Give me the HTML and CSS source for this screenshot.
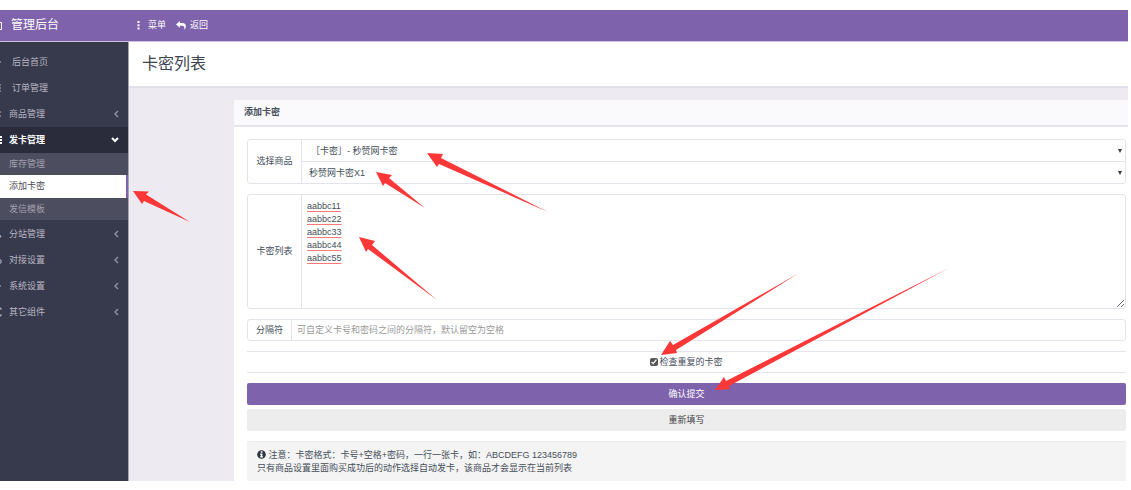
FILE: index.html
```html
<!DOCTYPE html>
<html lang="zh-CN">
<head>
<meta charset="utf-8">
<title>管理后台 - 卡密列表</title>
<link rel="stylesheet" href="styles.css">
</head>
<body>
<div class="app">
  <header class="topbar">
    <a class="brand" href="#">
      <svg class="edge-icon" viewBox="0 0 3 12"><path d="M0 2.5h1.500v7H0" fill="none" stroke="currentColor"/></svg>
      <span>管理后台</span>
    </a>
    <nav class="topnav">
      <a href="#"><svg class="dots" viewBox="0 0 3 9"><path d="M.5 0h2v2h-2zM.5 3.3h2v2h-2zM.5 6.6h2v2h-2z" fill="currentColor"/></svg>菜单</a>
      <a href="#"><svg class="reply" viewBox="0 0 10 9"><path d="M0 3.4 3.8 0v2H6c3 0 4 1.600 3.900 3.600C9.800 7 9 8.200 8.300 9 8.700 6.500 8.400 4.800 6 4.800H3.800v2z" fill="currentColor"/></svg>返回</a>
    </nav>
  </header>
  <div class="body">
    <aside class="sidebar">
      <ul class="menu">
        <li><a class="item wide" href="#"><svg class="edge-icon" viewBox="0 0 3 12"><path d="M0 6h1" stroke="currentColor"/></svg><span>后台首页</span></a></li>
        <li><a class="item wide" href="#"><svg class="edge-icon" viewBox="0 0 3 12"><path d="M0 3h1M0 6h1M0 9h1" stroke="currentColor"/></svg><span>订单管理</span></a></li>
        <li><a class="item" href="#"><svg class="edge-icon" viewBox="0 0 3 12"><path d="M0 4h1M0 8h1" stroke="currentColor"/></svg><span>商品管理</span><svg class="caret" viewBox="0 0 6 8"><path d="M5 1 2 4l3 3" /></svg></a></li>
        <li>
          <a class="item open" href="#"><svg class="edge-icon" viewBox="0 0 3 12"><path d="M0 3h2M0 6h2M0 9h2" stroke="currentColor" stroke-width="2"/></svg><span>发卡管理</span><svg class="caret down" viewBox="0 0 8 6"><path d="m1 1 3 3 3-3"/></svg></a>
          <ul class="submenu">
            <li><a href="#">库存管理</a></li>
            <li><a class="current" href="#">添加卡密</a></li>
            <li><a href="#">发信模板</a></li>
          </ul>
        </li>
        <li><a class="item" href="#"><svg class="edge-icon" viewBox="0 0 3 12"><path d="M0 7l1 2H0" stroke="currentColor" fill="none"/></svg><span>分站管理</span><svg class="caret" viewBox="0 0 6 8"><path d="M5 1 2 4l3 3"/></svg></a></li>
        <li><a class="item" href="#"><svg class="edge-icon" viewBox="0 0 3 12"><path d="M0 6h1v3H0" stroke="currentColor" fill="none"/></svg><span>对接设置</span><svg class="caret" viewBox="0 0 6 8"><path d="M5 1 2 4l3 3"/></svg></a></li>
        <li><a class="item" href="#"><svg class="edge-icon" viewBox="0 0 3 12"><path d="M0 6h1" stroke="currentColor"/></svg><span>系统设置</span><svg class="caret" viewBox="0 0 6 8"><path d="M5 1 2 4l3 3"/></svg></a></li>
        <li><a class="item" href="#"><svg class="edge-icon" viewBox="0 0 3 12"><path d="M0 2h1v2M0 10h1V8" stroke="currentColor" fill="none"/></svg><span>其它组件</span><svg class="caret" viewBox="0 0 6 8"><path d="M5 1 2 4l3 3"/></svg></a></li>
      </ul>
    </aside>
    <main class="main">
      <h1 class="page-title">卡密列表</h1>
      <section class="panel">
        <h2 class="panel-head">添加卡密</h2>
        <form class="form">
          <div class="group">
            <label class="addon" for="goods">选择商品</label>
            <div class="stack">
              <div class="select"><select id="goods" class="indent"><option>［卡密］- 秒赞网卡密</option></select></div>
              <div class="select"><select aria-label="商品规格"><option>秒赞网卡密X1</option></select></div>
            </div>
          </div>
          <div class="group">
            <label class="addon" for="cards">卡密列表</label>
            <textarea id="cards" spellcheck="false">aabbc11
aabbc22
aabbc33
aabbc44
aabbc55</textarea>
          </div>
          <div class="group">
            <label class="addon slim" for="sep">分隔符</label>
            <input id="sep" class="text" type="text" placeholder="可自定义卡号和密码之间的分隔符，默认留空为空格">
          </div>
          <div class="check"><label><input type="checkbox" checked>检查重复的卡密</label></div>
          <div class="actions">
            <button class="btn primary" type="submit">确认提交</button>
            <button class="btn" type="reset">重新填写</button>
          </div>
          <p class="note"><svg class="info" viewBox="0 0 10 10"><circle cx="5" cy="5" r="4.800" fill="#2f3542"/><path d="M4.200 1.500h1.800V3H4.200zM3.500 4H6v3h.6v1.200H3.500V7h.7V5.200h-.7z" fill="#fff"/></svg> 注意：卡密格式：卡号+空格+密码，一行一张卡，如：ABCDEFG 123456789<br>只有商品设置里面购买成功后的动作选择自动发卡，该商品才会显示在当前列表</p>
        </form>
      </section>
    </main>
  </div>
</div>
<svg class="arrows" viewBox="0 0 1131 490" aria-hidden="true">
  <path d="M133 191 149 191.500 146 194.500 190 222 144 201 142 204z"/>
  <path d="M427 153 443 154 441 158 548 212 439 164 437 167z"/>
  <path d="M376 172 392 175 389 178 425 208 385 183 383 186z"/>
  <path d="M359 237 375 241 372 245 437 300 368 249 366 252z"/>
  <path d="M661 355 670 341 673 345 799 273 676 350 677 353z"/>
  <path d="M715 390 724 377 726 381 949 268 729 386 730 389z"/>
</svg>
</body>
</html>
```
FILE: styles.css
```css
* { box-sizing: border-box; }
body {
  margin: 0;
  height: 100vh;
  padding: 10px 3px 9px 0;
  background: #fff;
  color: #454e59;
  font: 9px/13px "Liberation Sans", "Noto Sans CJK SC", sans-serif;
}
a { color: inherit; text-decoration: none; }
ul { margin: 0; padding: 0; list-style: none; }
.app { display: flex; flex-direction: column; height: 100%; overflow: hidden; }

.topbar {
  display: flex;
  flex: none;
  height: 32px;
  background: #7e62ab;
  border-bottom: 1px solid #cbc0df;
  color: #fff;
}
.brand { display: flex; align-items: center; gap: 8px; width: 137px; font-size: 12px; }
.edge-icon { flex: none; width: 3px; height: 12px; }
.topnav { display: flex; align-items: center; gap: 10px; }
.topnav a { display: flex; align-items: center; gap: 4px; }
.dots { width: 3px; height: 9px; margin-right: 4px; }
.reply { width: 10px; height: 9px; }

.body { display: flex; flex: 1; min-height: 0; }
.sidebar {
  flex: none;
  width: 129px;
  padding-top: 7px;
  background: #363a4c;
  border-right: 1px solid #a5a5b0;
  color: #b9b6c4;
}
.item { display: flex; align-items: center; gap: 6px; height: 26px; padding-right: 9px; }
.wide { gap: 9px; }
.item.open { background: #2a2c3c; color: #fff; font-weight: bold; }
.caret { width: 6px; height: 8px; margin-left: auto; fill: none; stroke: #8d8fa0; stroke-width: 1.5; }
.caret.down { width: 8px; height: 6px; stroke: #fff; stroke-width: 2; }
.submenu { margin-bottom: 1px; background: #4c4e5f; color: #a39fb0; }
.submenu a { display: block; padding: 0 9px; line-height: 22px; }
.submenu .current { background: #fff; color: #4a4b55; border-right: 2px solid #7e62ab; line-height: 23px; }

.main { flex: 1; min-width: 0; background: #edebf1; }
.page-title {
  margin: 0;
  padding: 0 13px;
  background: #fff;
  border-bottom: 2px solid #e2dfe8;
  color: #3c424e;
  font-size: 16px;
  font-weight: normal;
  line-height: 44px;
}
.panel { margin: 12px 0 0 105px; background: #fff; }
.panel-head {
  margin: 0;
  padding: 0 10px;
  background: #fafafc;
  border-bottom: 2px solid #e6e4ee;
  font-size: 9px;
  line-height: 25px;
}
.form { display: flex; flex-direction: column; gap: 10px; padding: 12px 2px 0 13px; }
.group { display: flex; border: 1px solid #e4e3ec; border-radius: 3px; }
.addon {
  display: flex;
  flex: none;
  align-items: center;
  justify-content: center;
  width: 54px;
  border-right: 1px solid #e4e3ec;
}
.addon.slim { width: 44px; }
.stack { flex: 1; }
.select { position: relative; }
.select + .select { border-top: 1px solid #e4e3ec; }
.select::after {
  content: "";
  position: absolute;
  top: 9px;
  right: 3px;
  border: solid transparent;
  border-width: 4px 2px 0;
  border-top-color: #333947;
  pointer-events: none;
}
select, textarea, .text { width: 100%; border: 0; outline: 0; background: transparent; color: inherit; font: inherit; }
select { display: block; height: 21px; padding: 2px 7px 0; appearance: none; }
select.indent { padding-left: 9px; }
textarea {
  display: block;
  flex: 1;
  height: 113px;
  padding: 5px;
  resize: both;
  text-decoration: underline 1px #f77;
  text-decoration-skip-ink: none;
  text-underline-offset: 2px;
}
.text { flex: 1; height: 20px; padding: 0 5px; }
.text::placeholder { color: #999; }
.check { display: flex; justify-content: center; border: solid #e4e3ec; border-width: 1px 0; line-height: 20px; }
.check label { display: flex; align-items: center; }
.check input { width: 8px; height: 8px; margin: 0 1px 0 0; accent-color: #555; }
.actions { display: flex; flex-direction: column; gap: 4px; }
.btn { height: 22px; border: 0; border-radius: 2px; background: #ededed; color: #3f3f46; font: inherit; }
.btn.primary { background: #7e62ab; color: #fff; }
.note { margin: 0; padding: 7px 10px 8px; background: #f4f4f4; border-top: 1px solid #ebebeb; border-radius: 2px; }
.info { width: 9px; height: 9px; vertical-align: -1px; }

.arrows { position: absolute; top: 0; left: 0; width: 100%; height: 100%; fill: #fb3737; pointer-events: none; }
```
